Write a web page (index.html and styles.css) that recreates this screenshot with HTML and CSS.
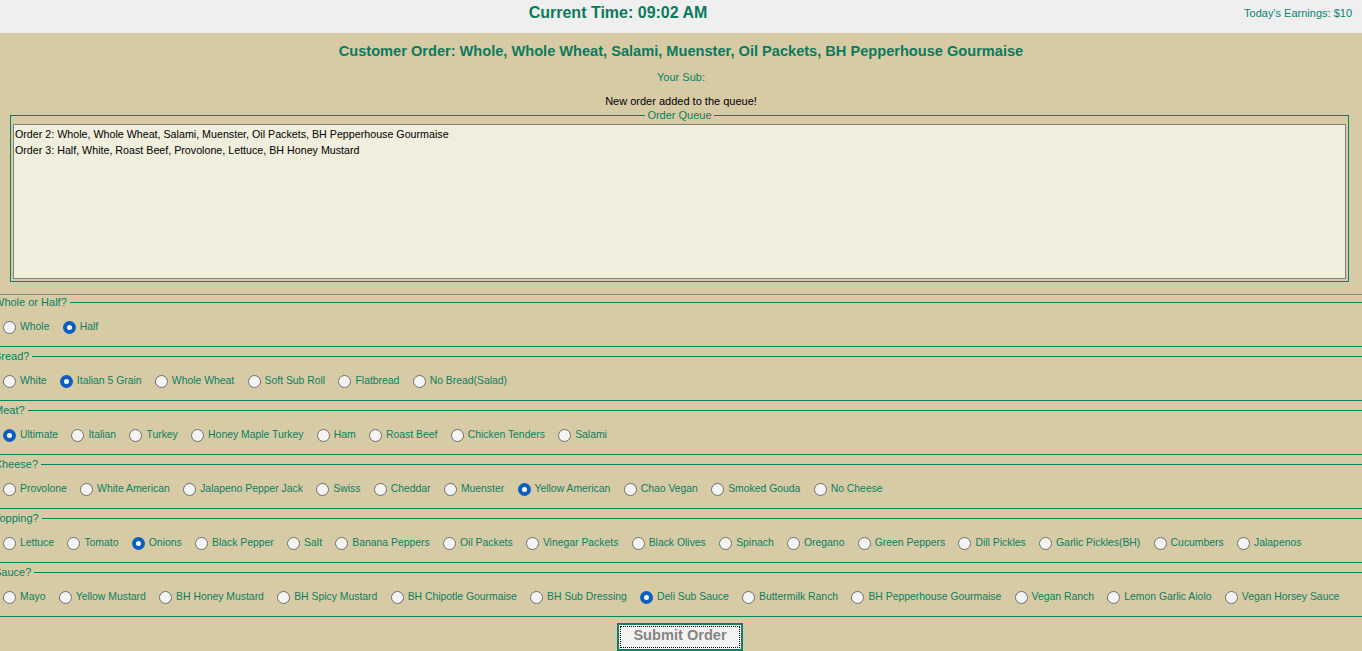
FILE: index.html
```html
<!DOCTYPE html>
<html>
<head>
<meta charset="utf-8">
<title>Sub Shop</title>
<link rel="stylesheet" href="styles.css">
</head>
<body>
<header class="topbar">
  <div class="clock">Current Time: 09:02 AM</div>
  <div class="earnings">Today's Earnings: $10</div>
</header>
<main class="main">
  <h1 class="order-title">Customer Order: Whole, Whole Wheat, Salami, Muenster, Oil Packets, BH Pepperhouse Gourmaise</h1>
  <p class="your-sub">Your Sub:</p>
  <p class="status">New order added to the queue!</p>
  <fieldset class="queue">
    <legend>Order Queue</legend>
    <div class="queue-box">Order 2: Whole, Whole Wheat, Salami, Muenster, Oil Packets, BH Pepperhouse Gourmaise<br>Order 3: Half, White, Roast Beef, Provolone, Lettuce, BH Honey Mustard</div>
  </fieldset>
  <form class="builder">
    <fieldset class="group">
      <legend>Whole or Half?</legend>
      <div class="options">
        <label class="opt"><input type="radio" name="size">Whole</label>
        <label class="opt"><input type="radio" name="size" checked>Half</label>
      </div>
    </fieldset>
    <fieldset class="group">
      <legend>Bread?</legend>
      <div class="options">
        <label class="opt"><input type="radio" name="bread">White</label>
        <label class="opt"><input type="radio" name="bread" checked>Italian 5 Grain</label>
        <label class="opt"><input type="radio" name="bread">Whole Wheat</label>
        <label class="opt"><input type="radio" name="bread">Soft Sub Roll</label>
        <label class="opt"><input type="radio" name="bread">Flatbread</label>
        <label class="opt"><input type="radio" name="bread">No Bread(Salad)</label>
      </div>
    </fieldset>
    <fieldset class="group">
      <legend>Meat?</legend>
      <div class="options">
        <label class="opt"><input type="radio" name="meat" checked>Ultimate</label>
        <label class="opt"><input type="radio" name="meat">Italian</label>
        <label class="opt"><input type="radio" name="meat">Turkey</label>
        <label class="opt"><input type="radio" name="meat">Honey Maple Turkey</label>
        <label class="opt"><input type="radio" name="meat">Ham</label>
        <label class="opt"><input type="radio" name="meat">Roast Beef</label>
        <label class="opt"><input type="radio" name="meat">Chicken Tenders</label>
        <label class="opt"><input type="radio" name="meat">Salami</label>
      </div>
    </fieldset>
    <fieldset class="group">
      <legend>Cheese?</legend>
      <div class="options">
        <label class="opt"><input type="radio" name="cheese">Provolone</label>
        <label class="opt"><input type="radio" name="cheese">White American</label>
        <label class="opt"><input type="radio" name="cheese">Jalapeno Pepper Jack</label>
        <label class="opt"><input type="radio" name="cheese">Swiss</label>
        <label class="opt"><input type="radio" name="cheese">Cheddar</label>
        <label class="opt"><input type="radio" name="cheese">Muenster</label>
        <label class="opt"><input type="radio" name="cheese" checked>Yellow American</label>
        <label class="opt"><input type="radio" name="cheese">Chao Vegan</label>
        <label class="opt"><input type="radio" name="cheese">Smoked Gouda</label>
        <label class="opt"><input type="radio" name="cheese">No Cheese</label>
      </div>
    </fieldset>
    <fieldset class="group">
      <legend>Topping?</legend>
      <div class="options">
        <label class="opt"><input type="radio" name="topping">Lettuce</label>
        <label class="opt"><input type="radio" name="topping">Tomato</label>
        <label class="opt"><input type="radio" name="topping" checked>Onions</label>
        <label class="opt"><input type="radio" name="topping">Black Pepper</label>
        <label class="opt"><input type="radio" name="topping">Salt</label>
        <label class="opt"><input type="radio" name="topping">Banana Peppers</label>
        <label class="opt"><input type="radio" name="topping">Oil Packets</label>
        <label class="opt"><input type="radio" name="topping">Vinegar Packets</label>
        <label class="opt"><input type="radio" name="topping">Black Olives</label>
        <label class="opt"><input type="radio" name="topping">Spinach</label>
        <label class="opt"><input type="radio" name="topping">Oregano</label>
        <label class="opt"><input type="radio" name="topping">Green Peppers</label>
        <label class="opt"><input type="radio" name="topping">Dill Pickles</label>
        <label class="opt"><input type="radio" name="topping">Garlic Pickles(BH)</label>
        <label class="opt"><input type="radio" name="topping">Cucumbers</label>
        <label class="opt"><input type="radio" name="topping">Jalapenos</label>
      </div>
    </fieldset>
    <fieldset class="group">
      <legend>Sauce?</legend>
      <div class="options">
        <label class="opt"><input type="radio" name="sauce">Mayo</label>
        <label class="opt"><input type="radio" name="sauce">Yellow Mustard</label>
        <label class="opt"><input type="radio" name="sauce">BH Honey Mustard</label>
        <label class="opt"><input type="radio" name="sauce">BH Spicy Mustard</label>
        <label class="opt"><input type="radio" name="sauce">BH Chipotle Gourmaise</label>
        <label class="opt"><input type="radio" name="sauce">BH Sub Dressing</label>
        <label class="opt"><input type="radio" name="sauce" checked>Deli Sub Sauce</label>
        <label class="opt"><input type="radio" name="sauce">Buttermilk Ranch</label>
        <label class="opt"><input type="radio" name="sauce">BH Pepperhouse Gourmaise</label>
        <label class="opt"><input type="radio" name="sauce">Vegan Ranch</label>
        <label class="opt"><input type="radio" name="sauce">Lemon Garlic Aiolo</label>
        <label class="opt"><input type="radio" name="sauce">Vegan Horsey Sauce</label>
      </div>
    </fieldset>
    <div class="submit-row">
      <button type="button" class="submit">Submit Order</button>
    </div>
  </form>
</main>
</body>
</html>
```

FILE: styles.css
```css
* { box-sizing: border-box; }

html, body {
  margin: 0;
  padding: 0;
  background: #d7cba5;
  overflow: hidden;
}

body {
  font-family: "Liberation Sans", Arial, sans-serif;
  font-size: 11px;
  color: #0a7f62;
  width: 1362px;
  height: 651px;
}

.topbar {
  height: 33px;
  background: #efefef;
  display: flex;
  align-items: flex-start;
  padding: 0 10px 0 0;
}

.clock {
  flex: 1;
  text-align: center;
  font-size: 16px;
  line-height: 20px;
  font-weight: bold;
  color: #0a7a5c;
  padding-top: 3px;
  padding-right: 8px;
}

.earnings {
  font-size: 11px;
  color: #0b8076;
  line-height: 14px;
  padding-top: 6px;
}

.main {
  display: flex;
  flex-direction: column;
}

.order-title {
  margin: 10px 0 0;
  text-align: center;
  font-size: 14.6px;
  line-height: 16px;
  font-weight: bold;
  color: #0a7a5c;
}

.your-sub {
  margin: 11px 0 0;
  text-align: center;
  line-height: 14px;
}

.status {
  margin: 10px 0 0;
  text-align: center;
  color: #000;
  line-height: 14px;
}

.queue {
  margin: 0 13px 0 10px;
  padding: 2px;
  border: 1px solid #0a7f62;
  min-width: 0;
}

.queue legend {
  margin: 0 auto;
  padding: 0 2px;
  line-height: 14px;
  font-size: 11px;
}

.queue-box {
  height: 155px;
  border: 1px solid #808080;
  background: #f0eedc;
  color: #000;
  padding: 1px 1px;
  font-size: 10.7px;
  line-height: 16px;
  white-space: nowrap;
}

.builder {
  margin-top: 12px;
  border-top: 1px solid #8c8c8c;
}

.group {
  margin: 0 0 2px;
  padding: 10px 0 11px 3px;
  border: none;
  border-top: 1px solid #0a7f62;
  border-bottom: 1px solid #0a7f62;
  min-width: 0;
}

.group legend {
  margin-left: -9px;
  padding: 0 3px 0 0;
  line-height: 14px;
  font-size: 11px;
}

.options {
  display: flex;
  flex-wrap: nowrap;
  align-items: center;
  height: 16px;
  white-space: nowrap;
}

.opt {
  display: inline-flex;
  align-items: center;
  margin-right: 13.3px;
  font-size: 10.4px;
  line-height: 16px;
}

.opt input {
  appearance: none;
  -webkit-appearance: none;
  width: 13px;
  height: 13px;
  margin: 0 4px 0 0;
  border-radius: 50%;
  border: 1px solid #6f6f6f;
  background: #f4f4f4;
  flex: none;
}

.opt input:checked {
  border: 4px solid #0a5ec1;
  background: #fff;
}

.submit-row {
  display: flex;
  justify-content: center;
  padding-top: 4px;
}

.submit {
  width: 126px;
  height: 28px;
  margin-left: -2px;
  border: 2px solid #0a7f62;
  background: #f4f4f4;
  outline: 1px dotted #000;
  outline-offset: -4px;
  font-family: "Liberation Sans", Arial, sans-serif;
  font-size: 14.6px;
  font-weight: bold;
  color: #848484;
  padding: 0 0 4px;
}
```
